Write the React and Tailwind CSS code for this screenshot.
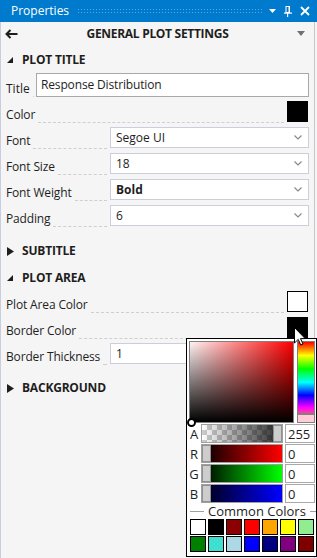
import React from "react";

function Chevron() {
  return (
    <svg width="8" height="5" viewBox="0 0 8 5" className="mr-[6px]">
      <polyline points="0.5,0.5 4,4 7.5,0.5" fill="none" stroke="#8a8a8a" strokeWidth="1.2" />
    </svg>
  );
}

function Dotted() {
  return <div className="flex-1 mx-[3px] border-b border-dashed border-[#cfcfcf]" />;
}

function Combo({ value, bold }) {
  return (
    <div className="w-[199px] h-[21px] mb-px flex items-center justify-between border border-[#cccedb] bg-white">
      <span className={bold ? "pl-[5px] text-[12px] leading-[16px] font-bold text-[#1e1e1e]" : "pl-[5px] text-[12px] leading-[16px] text-[#1e1e1e]"}>{value}</span>
      <Chevron />
    </div>
  );
}

function Row({ label, children }) {
  return (
    <div className="flex items-end h-[26px]">
      <span className="text-[12px] leading-[16px] text-[#1e1e1e] whitespace-nowrap tracking-[-0.15px]">{label}</span>
      <Dotted />
      {children}
    </div>
  );
}

function Section({ title, open, h }) {
  return (
    <div className={h === 24 ? "flex items-center h-[24px]" : h === 28 ? "flex items-center h-[28px]" : "flex items-center h-[26px]"}>
      <div className="w-[16px] flex items-center">
        {open ? (
          <svg width="7" height="7" viewBox="0 0 7 7" className="ml-[1px]">
            <polygon points="6,0 6,6 0,6" fill="#1e1e1e" />
          </svg>
        ) : (
          <svg width="7" height="9" viewBox="0 0 7 9" className="ml-[1px]">
            <polygon points="0,0 7,4.5 0,9" fill="#1e1e1e" />
          </svg>
        )}
      </div>
      <span className="text-[12px] leading-[16px] font-bold text-[#1e1e1e] tracking-[-0.2px]">{title}</span>
    </div>
  );
}

function SliderRow({ label, outer, track, thumbRight, value }) {
  return (
    <div className="flex items-center h-[19px]">
      <span className="w-[14px] text-center text-[13px] leading-[16px] text-[#1e1e1e]">{label}</span>
      <div className={"w-[82px] h-[19px] border border-[#a0a0a0] flex " + outer}>
        <div className={thumbRight ? "flex-1 flex justify-end " + track : "flex-1 flex justify-start " + track}>
          <div className="w-[9px] h-full bg-[#cdcdcd] border border-[#909090]" />
        </div>
      </div>
      <div className="ml-[2px] w-[30px] h-[19px] border border-[#a9a9a9] bg-white flex items-center pl-[2px] text-[13px] leading-[16px] text-[#1e1e1e]">
        {value}
      </div>
    </div>
  );
}

const swatches = [
  "bg-[#ffffff]",
  "bg-[#000000]",
  "bg-[#8b0000]",
  "bg-[#ff0000]",
  "bg-[#ffa500]",
  "bg-[#ffff00]",
  "bg-[#90ee90]",
  "bg-[#008000]",
  "bg-[#40e0d0]",
  "bg-[#add8e6]",
  "bg-[#0000ff]",
  "bg-[#000080]",
  "bg-[#800080]",
  "bg-[#800000]",
];

export default function App() {
  return (
    <div className="relative w-[317px] h-[558px] overflow-hidden bg-[#f5f5f5] font-['Open_Sans',sans-serif]">
      {/* Title bar */}
      <div className="h-[22px] bg-[#007acc] flex items-center">
        <span className="pl-[11px] text-[12px] leading-[16px] text-white">Properties</span>
        <div className="flex-1 ml-[8px] mr-[6px] h-[6px] bg-[radial-gradient(#56a8de_0.7px,transparent_0.9px)] bg-[length:3px_3px]" />
        <div className="flex items-center gap-[8px] pr-[7px]">
          <svg width="7" height="4" viewBox="0 0 7 4">
            <polygon points="0,0 7,0 3.5,4" fill="#ffffff" />
          </svg>
          <svg width="8" height="11" viewBox="0 0 8 11">
            <rect x="2" y="0.5" width="3.5" height="6" fill="none" stroke="#fff" strokeWidth="1" />
            <rect x="4.5" y="0" width="1.5" height="7" fill="#fff" />
            <rect x="0" y="6.5" width="8" height="1.2" fill="#fff" />
            <rect x="3" y="7" width="1.2" height="4" fill="#fff" />
          </svg>
          <svg width="10" height="10" viewBox="0 0 10 10">
            <path d="M1 1 L9 9 M9 1 L1 9" stroke="#fff" strokeWidth="1.8" />
          </svg>
        </div>
      </div>

      {/* Body */}
      <div className="w-[315px] h-[536px] border-l border-r border-l-[#c9cde0] border-r-[#c8c8c8]">
        {/* header */}
        <div className="flex items-center h-[24px]">
          <div className="w-[28px] pl-[4px] flex items-center">
            <svg width="13" height="10" viewBox="0 0 13 10">
              <path d="M12.5 5 L1.5 5 M5.5 1 L1.5 5 L5.5 9" stroke="#1e1e1e" strokeWidth="2" fill="none" />
            </svg>
          </div>
          <div className="flex-1 text-center text-[12px] leading-[16px] font-bold text-[#1e1e1e] tracking-[-0.3px]">GENERAL PLOT SETTINGS</div>
          <div className="w-[28px] pr-[9px] flex justify-end">
            <svg width="8" height="6" viewBox="0 0 8 6">
              <polygon points="0,0 8,0 4,5" fill="#717171" />
            </svg>
          </div>
        </div>

        <div className="pl-[5px] pr-[5px]">
          <div className="mt-[2px]">
            <Section title="PLOT TITLE" open h={24} />
          </div>
          <div className="flex items-end h-[25px]">
            <span className="text-[12px] leading-[16px] text-[#1e1e1e]">Title</span>
            <Dotted />
            <div className="w-[273px] h-[24px] border border-[#a8a8a8] bg-white pl-[4px] pt-[3px] text-[12px] leading-[16px] text-[#1e1e1e] tracking-[-0.15px]">
              Response Distribution
            </div>
          </div>
          <Row label="Color">
            <div className="w-[21px] h-[21px] mb-px mr-px bg-black" />
          </Row>
          <Row label="Font">
            <Combo value="Segoe UI" />
          </Row>
          <Row label="Font Size">
            <Combo value="18" />
          </Row>
          <Row label="Font Weight">
            <Combo value="Bold" bold />
          </Row>
          <Row label="Padding">
            <Combo value="6" />
          </Row>

          <div className="mt-[10px]">
            <Section title="SUBTITLE" h={28} />
          </div>
          <Section title="PLOT AREA" open />
          <div className="flex items-end h-[22px]">
            <span className="text-[12px] leading-[16px] text-[#1e1e1e] whitespace-nowrap tracking-[-0.15px]">Plot Area Color</span>
            <Dotted />
            <div className="w-[21px] h-[21px] mb-px mr-px bg-white border border-black" />
          </div>
          <Row label="Border Color">
            <div className="w-[21px] h-[21px] mb-px mr-px bg-black" />
          </Row>
          <Row label="Border Thickness">
            <div className="w-[199px] h-[21px] mb-px flex items-center border border-[#cccedb] bg-white pl-[5px] text-[12px] leading-[16px] text-[#1e1e1e]">
              1
            </div>
          </Row>
          <div className="mt-[10px]">
            <Section title="BACKGROUND" />
          </div>
        </div>
      </div>

      {/* Color picker popup */}
      <div className="absolute left-[186px] top-[338px] w-[131px] h-[219px] border border-black bg-white pl-[2px] pt-[2px]">
        <div className="flex gap-[3px]">
          <div className="w-[105px] h-[82px] border border-[#808080] bg-[linear-gradient(to_right,#fff4f4,#ff0000)]">
            <div className="w-full h-full bg-[linear-gradient(to_bottom,transparent,#000000)]" />
          </div>
          <div className="flex flex-col">
            <div className="w-[18px] h-[73px] border border-[#808080] bg-[linear-gradient(to_bottom,#ff0000_0%,#ffff00_19%,#00ff00_38%,#00ffff_57%,#0000ff_75%,#ff00ff_92%,#ff40a0_100%)]" />
            <div className="w-[18px] h-[9px] border border-[#808080] bg-[#ffccd8]" />
          </div>
        </div>
        <div className="absolute left-[0px] top-[79px] w-[9px] h-[9px] rounded-full border-2 border-black bg-white" />
        <div className="mt-[1px] -ml-[2px] flex flex-col gap-px">
          <SliderRow
            label="A"
            outer="bg-[conic-gradient(#cccccc_25%,#ffffff_0_50%,#cccccc_0_75%,#ffffff_0)] bg-[length:10px_10px]"
            track="bg-[linear-gradient(to_right,rgba(0,0,0,0),rgba(0,0,0,0.85))]"
            thumbRight
            value="255"
          />
          <SliderRow label="R" outer="" track="bg-[linear-gradient(to_right,#000000,#ff0000)]" value="0" />
          <SliderRow label="G" outer="" track="bg-[linear-gradient(to_right,#000000,#00ff00)]" value="0" />
          <SliderRow label="B" outer="" track="bg-[linear-gradient(to_right,#000010,#0000ff)]" value="0" />
        </div>
        <div className="-ml-[2px] flex items-center h-[16px] pl-[3px]">
          <div className="w-[14px] h-px bg-[#a0a0a0]" />
          <span className="px-[4px] text-[13px] leading-[16px] text-[#1e1e1e] whitespace-nowrap">Common Colors</span>
          <div className="flex-1 h-px bg-[#a0a0a0]" />
        </div>
        <div className="ml-[1px] grid grid-cols-[repeat(7,16px)] gap-x-[2px] gap-y-[1px]">
          {swatches.map((c, i) => (
            <div key={i} className={"w-[16px] h-[16px] border border-black " + c} />
          ))}
        </div>
      </div>

      {/* Mouse cursor */}
      <svg className="absolute left-[294px] top-[327px]" width="12" height="19" viewBox="0 0 12 19">
        <path d="M0.5 0.5 L0.5 16 L4.2 12.4 L6.8 18 L9 17 L6.5 11.6 L11.2 11.6 Z" fill="#ffffff" stroke="#000000" strokeWidth="1" strokeLinejoin="round" />
      </svg>
    </div>
  );
}
